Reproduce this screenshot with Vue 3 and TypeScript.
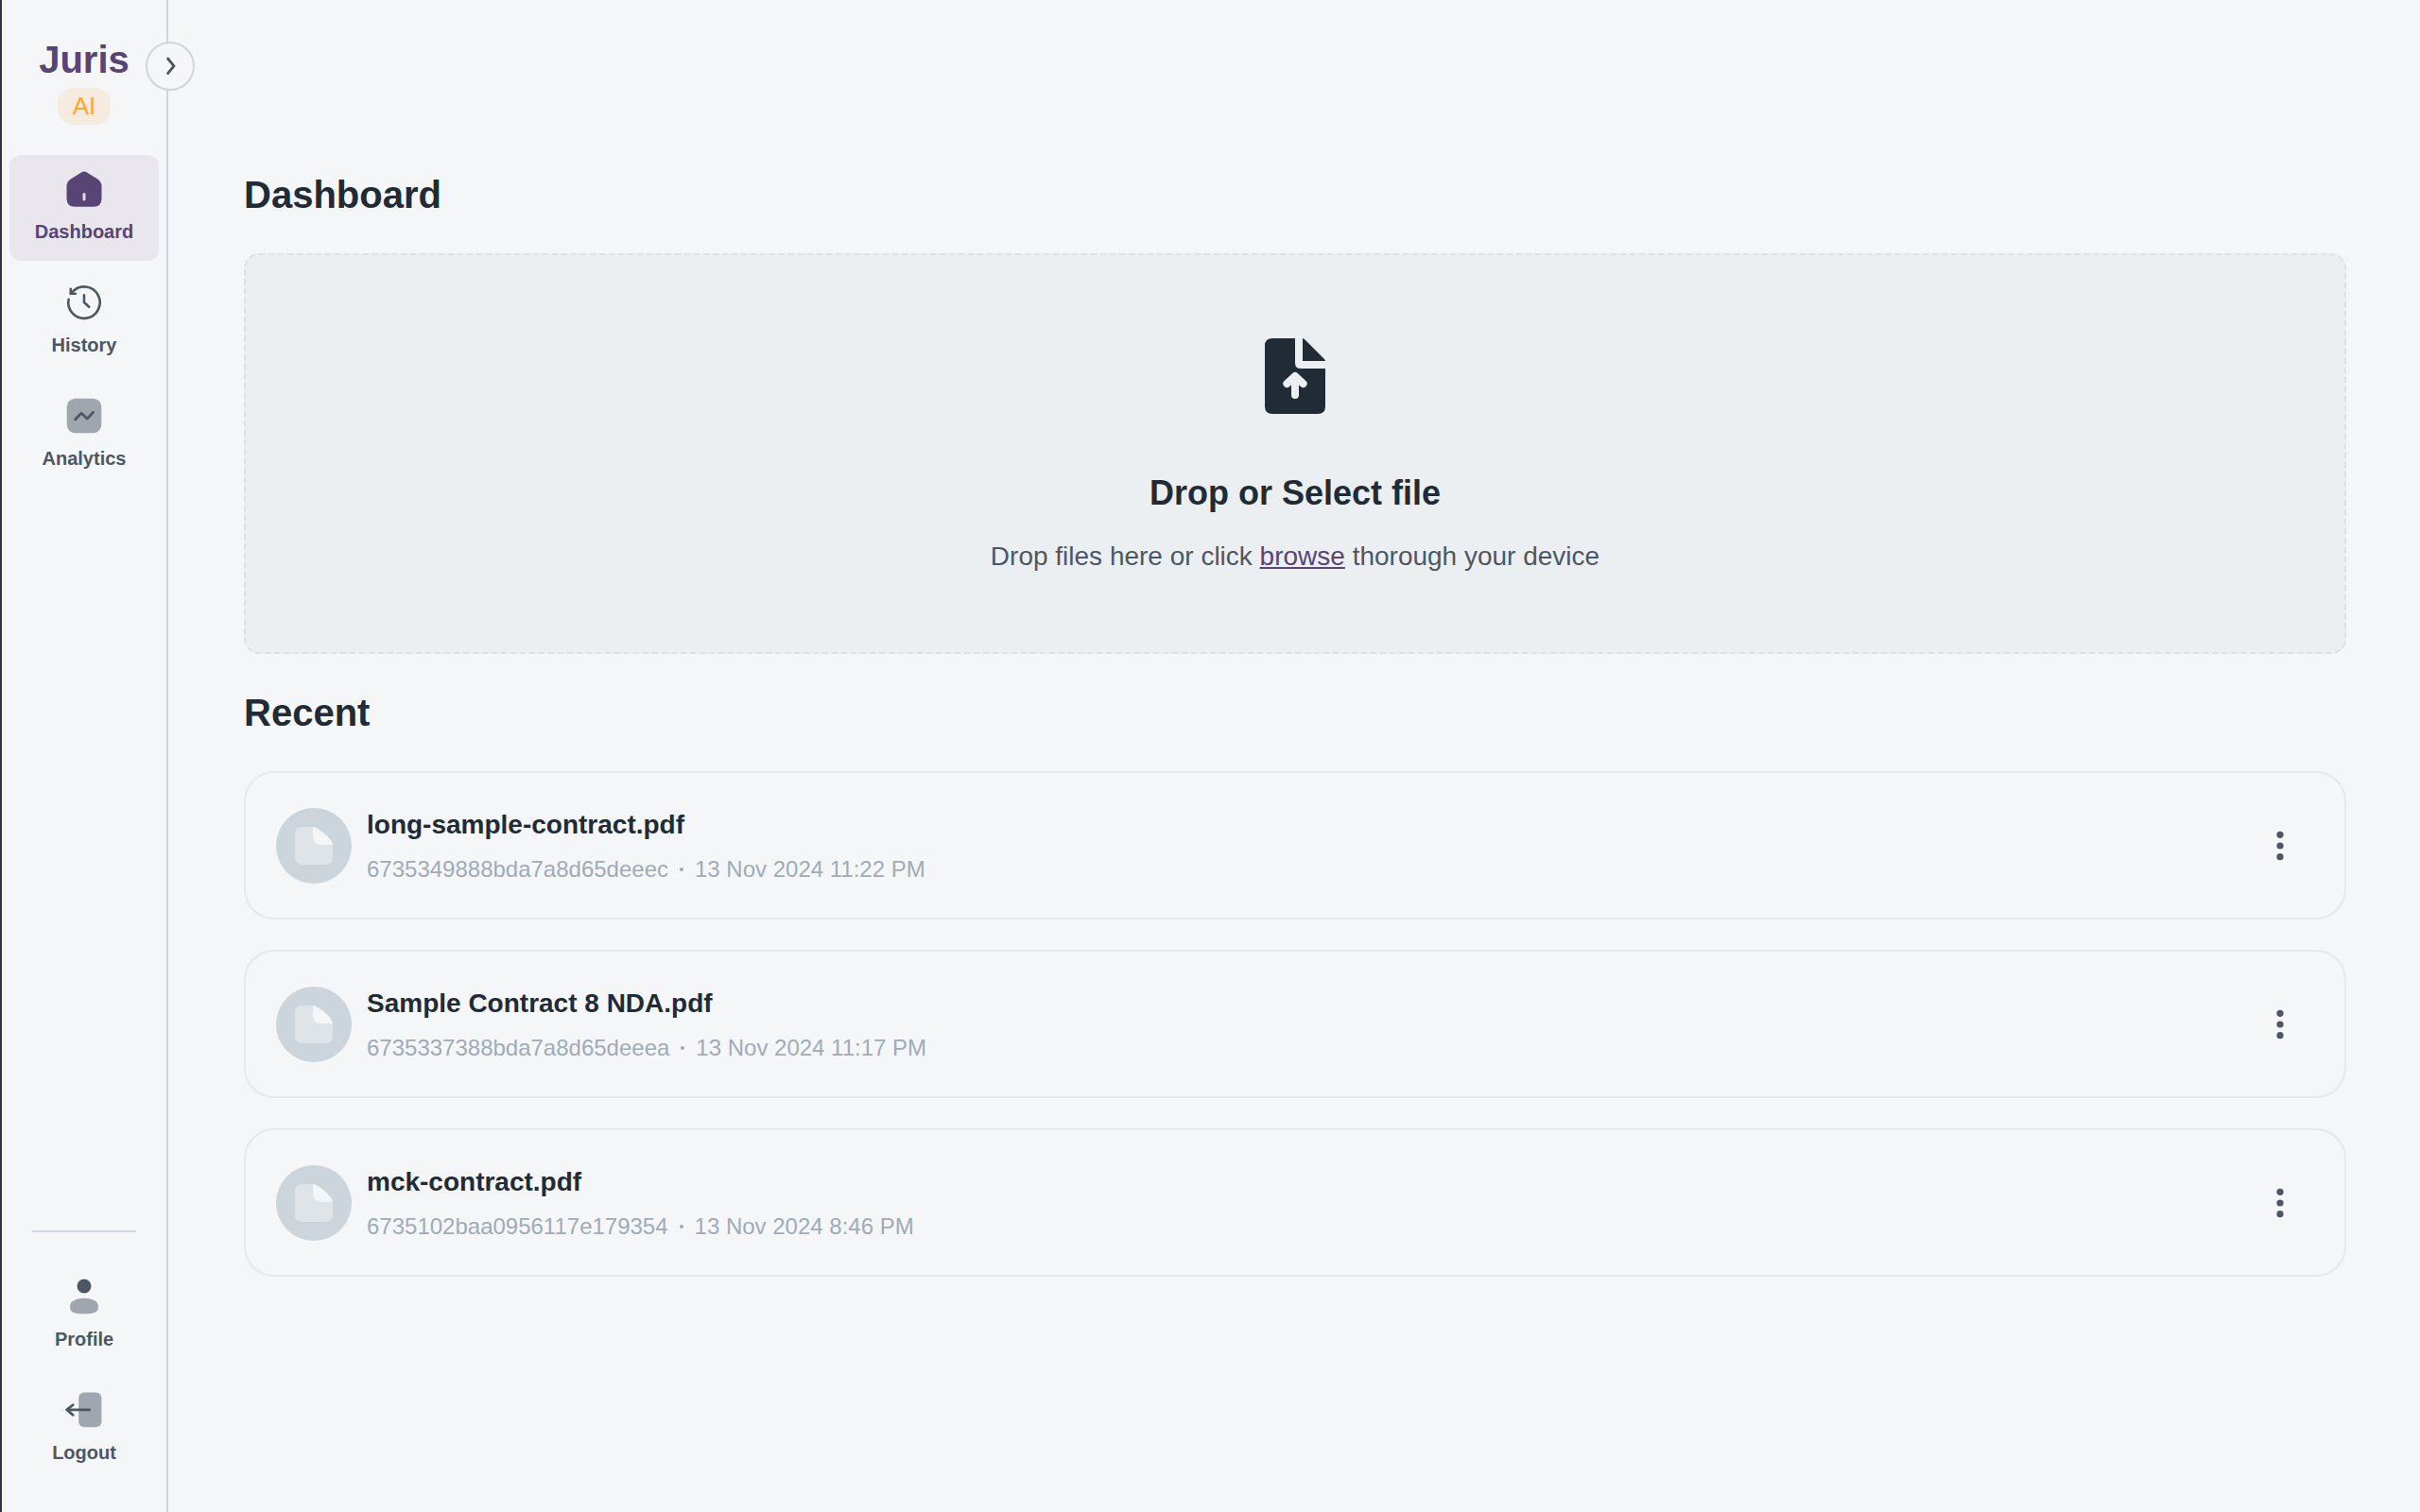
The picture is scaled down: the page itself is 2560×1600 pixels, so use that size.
<script setup lang="ts">
interface RecentFile {
  id: string
  name: string
  date: string
}

const files: RecentFile[] = [
  { id: '6735349888bda7a8d65deeec', name: 'long-sample-contract.pdf', date: '13 Nov 2024 11:22 PM' },
  { id: '6735337388bda7a8d65deeea', name: 'Sample Contract 8 NDA.pdf', date: '13 Nov 2024 11:17 PM' },
  { id: '6735102baa0956117e179354', name: 'mck-contract.pdf', date: '13 Nov 2024 8:46 PM' },
]
</script>

<template>
  <div class="layout">
    <aside class="sidebar">
      <button class="toggle" type="button" aria-label="Expand sidebar">
        <svg width="24" height="24" viewBox="0 0 24 24" fill="none" stroke="currentColor" stroke-width="2.8" stroke-linecap="round" stroke-linejoin="round">
          <path d="M9.6 4l6.4 7.8-6.4 7.8" />
        </svg>
      </button>

      <div class="brand">
        <span class="brand-name">Juris</span>
        <span class="brand-tag">AI</span>
      </div>

      <nav class="nav">
        <a class="item active" href="#dashboard">
          <svg class="icon" viewBox="0 0 44 44">
            <path fill="currentColor" d="M18.6 4.7Q22 2.4 25.4 4.7L36.2 11.4Q40.5 14.4 40.5 19V32Q40.5 40.7 31.7 40.7H12.3Q3.5 40.7 3.5 32V19Q3.5 14.4 7.8 11.4Z" />
            <rect x="20.5" y="26" width="3" height="8.4" rx="1.5" fill="#e0dce7" />
          </svg>
          <span>Dashboard</span>
        </a>
        <a class="item" href="#history">
          <svg class="icon" viewBox="0 0 44 44" fill="none" stroke="currentColor" stroke-width="2.6" stroke-linecap="round" stroke-linejoin="round">
            <path d="M5.6 18.8A16.7 16.7 0 1 0 9.5 11L7.8 12.6" />
            <path d="M7.8 7.8V12.7H12.8" />
            <path d="M22 14.4V22L27.2 26.8" />
          </svg>
          <span>History</span>
        </a>
        <a class="item" href="#analytics">
          <svg class="icon" viewBox="0 0 44 44">
            <rect x="3.7" y="3.7" width="36.6" height="36.6" rx="9" fill="#a0a6ae" />
            <path d="M12.7 25.8L19 19.2 25.3 25 31.6 18.2" fill="none" stroke="currentColor" stroke-width="2.8" stroke-linecap="round" stroke-linejoin="round" />
          </svg>
          <span>Analytics</span>
        </a>
      </nav>

      <hr class="divider" />

      <nav class="nav account">
        <a class="item" href="#profile">
          <svg class="icon" viewBox="0 0 44 44">
            <circle cx="22" cy="11" r="7.5" fill="currentColor" />
            <path fill="#a0a6ae" d="M22 23.7C30 23.7 37 27 37 32.5C37 39 33 40.3 22 40.3S7 39 7 32.5C7 27 14 23.7 22 23.7Z" />
          </svg>
          <span>Profile</span>
        </a>
        <a class="item" href="#logout">
          <svg class="icon" viewBox="0 0 44 44">
            <rect x="16.2" y="3.6" width="24.2" height="36.7" rx="6" fill="#a0a6ae" />
            <path d="M27.8 21.8H3.6M10.2 16.6L3.6 21.8 10.2 27.4" fill="none" stroke="currentColor" stroke-width="2.7" stroke-linecap="round" stroke-linejoin="round" />
          </svg>
          <span>Logout</span>
        </a>
      </nav>
    </aside>

    <main class="main">
      <h1 class="heading">Dashboard</h1>

      <section class="dropzone">
        <svg class="upload" viewBox="0 0 96 96" fill="#212b36">
          <path d="M24 8H48V34Q48 40 54 40H80V80Q80 88 72 88H24Q16 88 16 80V16Q16 8 24 8Z" />
          <path d="M56 8Q57 8 59 10L78 29Q80 31 80 32H56Z" />
          <path d="M48 68V48.6M39.4 56L48 48 56.6 56" fill="none" stroke="#ebeff2" stroke-width="8" stroke-linecap="round" stroke-linejoin="round" />
        </svg>
        <h2 class="drop-title">Drop or Select file</h2>
        <p class="drop-text">Drop files here or click <a href="#browse">browse</a> thorough your device</p>
      </section>

      <h1 class="heading">Recent</h1>

      <ul class="files">
        <li v-for="file in files" :key="file.id" class="file">
          <span class="avatar">
            <svg width="40" height="40" viewBox="0 0 40 40">
              <path fill="#dfe4e8" d="M8 0H19L40 19V32Q40 40 32 40H8Q0 40 0 32V8Q0 0 8 0Z" />
              <path fill="#f4f6f8" d="M19 0C24 0 40 13 40 19H28Q19 19 19 10Z" />
            </svg>
          </span>
          <div class="info">
            <h3 class="name">{{ file.name }}</h3>
            <p class="meta">
              <span>{{ file.id }}</span>
              <span class="dot"></span>
              <time>{{ file.date }}</time>
            </p>
          </div>
          <button class="more" type="button" :aria-label="`Options for ${file.name}`">
            <svg width="40" height="40" viewBox="0 0 40 40" fill="currentColor">
              <circle cx="20" cy="8.3" r="3.6" />
              <circle cx="20" cy="20" r="3.6" />
              <circle cx="20" cy="31.7" r="3.6" />
            </svg>
          </button>
        </li>
      </ul>
    </main>
  </div>
</template>

<style>
body {
  margin: 0;
  background: #f4f6f8;
}
</style>

<style scoped>
* {
  box-sizing: border-box;
}

h1,
h2,
h3,
p,
ul {
  margin: 0;
  padding: 0;
}

.layout {
  display: flex;
  min-height: 100vh;
  border-left: 2px solid #35334a;
  background: #f4f6f8;
  color: #212b36;
  font-family: "Liberation Sans", Arial, sans-serif;
}

.sidebar {
  position: relative;
  display: flex;
  flex-direction: column;
  flex: none;
  width: 176px;
  padding: 33px 8px 32px;
  border-right: 2px solid #d0d7de;
}

.toggle {
  position: absolute;
  top: 44px;
  right: -30px;
  display: flex;
  align-items: center;
  justify-content: center;
  width: 52px;
  height: 52px;
  padding: 0;
  border: 2px solid #d0d5dc;
  border-radius: 50%;
  background: #f4f6f8;
  color: #4b5661;
}

.brand {
  display: flex;
  flex-direction: column;
  align-items: center;
  margin-bottom: 32px;
}

.brand-name {
  color: #584475;
  font-size: 40px;
  font-weight: 700;
  line-height: 60px;
}

.brand-tag {
  padding: 0 16px;
  border-radius: 16px;
  background: #f6ebdf;
  color: #ffa530;
  font-size: 26px;
  line-height: 39px;
}

.nav {
  display: flex;
  flex-direction: column;
  gap: 8px;
}

.item {
  display: flex;
  flex-direction: column;
  align-items: center;
  gap: 8px;
  padding: 14px 0 16px;
  border-radius: 12px;
  color: #4d5763;
  font-size: 20px;
  font-weight: 700;
  line-height: 30px;
  text-decoration: none;
}

.item.active {
  background: #e9e7ed;
  color: #584475;
}

.icon {
  width: 44px;
  height: 44px;
}

.divider {
  width: 110px;
  height: 2px;
  margin: auto auto 32px;
  border: 0;
  background: #d0d7de;
}

.main {
  flex: 1;
  display: flex;
  flex-direction: column;
  gap: 32px;
  min-width: 0;
  padding: 176px 78px 80px 80px;
}

.heading {
  font-size: 40px;
  font-weight: 700;
  line-height: 60px;
}

.dropzone {
  display: flex;
  flex-direction: column;
  align-items: center;
  padding: 80px 24px;
  border: 2px dashed #dde0e5;
  border-radius: 16px;
  background: #ebeff2;
}

.upload {
  width: 96px;
  height: 96px;
  margin-bottom: 48px;
}

.drop-title {
  margin-bottom: 18px;
  font-size: 36px;
  font-weight: 700;
  line-height: 56px;
}

.drop-text {
  color: #4d5763;
  font-size: 28px;
  line-height: 42px;
}

.drop-text a {
  color: #584475;
}

.files {
  display: flex;
  flex-direction: column;
  gap: 32px;
  list-style: none;
}

.file {
  display: flex;
  align-items: center;
  gap: 16px;
  padding: 32px;
  border: 2px solid #e6e8ed;
  border-radius: 32px;
}

.avatar {
  display: flex;
  align-items: center;
  justify-content: center;
  flex: none;
  width: 80px;
  height: 80px;
  border-radius: 50%;
  background: #ccd4dc;
}

.info {
  flex: 1;
  min-width: 0;
}

.name {
  margin-bottom: 4px;
  font-size: 28px;
  font-weight: 700;
  line-height: 46px;
}

.meta {
  display: flex;
  align-items: center;
  color: #a0abb8;
  font-size: 24px;
  line-height: 39px;
}

.dot {
  width: 4px;
  height: 4px;
  margin: 0 12px;
  border-radius: 50%;
  background: currentColor;
}

.more {
  display: flex;
  align-items: center;
  justify-content: center;
  width: 72px;
  height: 72px;
  padding: 0;
  border: 0;
  background: none;
  color: #4d5763;
}
</style>
